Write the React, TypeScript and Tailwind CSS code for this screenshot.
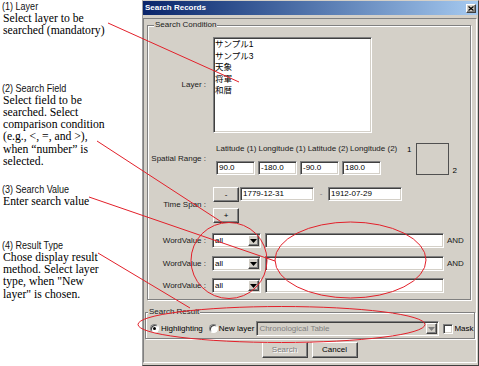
const ui = "font-['Liberation_Sans',Arial,sans-serif] text-[8px] leading-[10px] text-black whitespace-nowrap";
const sunken =
  "border border-t-[#808080] border-l-[#808080] border-r-white border-b-white shadow-[inset_1px_1px_0_#404040,inset_-1px_-1px_0_#d4d0c8]";
const raised =
  "border border-t-white border-l-white border-r-[#404040] border-b-[#404040] shadow-[inset_-1px_-1px_0_#808080,inset_1px_1px_0_#d4d0c8]";
const etched = "border border-[#808080] shadow-[1px_1px_0_white,inset_1px_1px_0_white]";

type Note = { title: string; lines: string[]; mt: string };

const notes: Note[] = [
  { title: "(1) Layer", lines: ["Select layer to be", "searched (mandatory)"], mt: "mt-0" },
  {
    title: "(2) Search Field",
    lines: [
      "Select field to be",
      "searched. Select",
      "comparison condition",
      "(e.g., <, =, and >),",
      "when \u201cnumber\u201d is",
      "selected.",
    ],
    mt: "mt-[44px]",
  },
  { title: "(3) Search Value", lines: ["Enter search value"], mt: "mt-[15px]" },
  {
    title: "(4) Result Type",
    lines: ["Chose display result", "method. Select layer", 'type, when "New', 'layer" is chosen.'],
    mt: "mt-[30px]",
  },
];

function Label({ children, className = "" }: { children: React.ReactNode; className?: string }) {
  return <div className={`w-[58px] shrink-0 text-right text-[#1a1a1a] ${className}`}>{children}</div>;
}

function Field({ value, className = "" }: { value?: string; className?: string }) {
  return (
    <div className={`${sunken} bg-white shrink-0 flex items-center pl-[2px] overflow-hidden ${className}`}>
      {value}
    </div>
  );
}

function Arrow({ disabled }: { disabled?: boolean }) {
  return (
    <svg width="7" height="4" viewBox="0 0 7 4">
      <path d="M0 0h7L3.5 4z" fill={disabled ? "#808080" : "#000"} />
    </svg>
  );
}

function Combo({ value, className = "", disabled }: { value: string; className?: string; disabled?: boolean }) {
  return (
    <div
      className={`${sunken} ${disabled ? "bg-[#d4d0c8] text-[#808080]" : "bg-white"} shrink-0 flex items-stretch p-[1px] ${className}`}
    >
      <div className="flex-1 flex items-center pl-[1px] overflow-hidden">{value}</div>
      <div className={`${raised} bg-[#d4d0c8] w-[11px] flex items-center justify-center`}>
        <Arrow disabled={disabled} />
      </div>
    </div>
  );
}

function Radio({ checked }: { checked?: boolean }) {
  return (
    <div className="w-[9px] h-[9px] shrink-0 rounded-full border border-t-[#808080] border-l-[#808080] border-r-white border-b-white bg-white flex items-center justify-center shadow-[inset_1px_1px_0_#404040]">
      {checked && <div className="w-[3px] h-[3px] rounded-full bg-black" />}
    </div>
  );
}

function WordRow({ and, mt }: { and: boolean; mt: string }) {
  return (
    <div className={`flex items-center ${mt}`}>
      <Label>WordValue :</Label>
      <Combo value="all" className="ml-[6px] w-[49px] h-[15px]" />
      <Field className="ml-[4px] w-[179px] h-[15px]" />
      {and && <span className="ml-[3px] text-[#1a1a1a]">AND</span>}
    </div>
  );
}

export default function App() {
  return (
    <div className="relative w-[479px] h-[366px] bg-white flex overflow-hidden">
      <div className="w-[142px] shrink-0 pl-[2px]">
        {notes.map((n) => (
          <div key={n.title} className={n.mt}>
            <div className="h-[13px] font-['Liberation_Sans',sans-serif] text-[10.5px] leading-[13px] text-[#111]">
              <span className="inline-block origin-left scale-x-[0.86] whitespace-nowrap">{n.title}</span>
            </div>
            {n.lines.map((l) => (
              <div key={l} className="pl-[1px] font-['Liberation_Serif',serif] text-[11.7px] leading-[12.3px] whitespace-nowrap">
                {l}
              </div>
            ))}
          </div>
        ))}
      </div>

      <div
        className={`${ui} w-[337px] h-[366px] shrink-0 flex flex-col bg-[#d4d0c8] border border-t-[#d4d0c8] border-l-[#a0a0a0] border-r-[#404040] border-b-[#404040]`}
      >
        <div className="h-[14px] shrink-0 flex items-center justify-between bg-gradient-to-r from-[#0a246a] to-[#a6caf0] pl-[2px] pr-[2px]">
          <span className="font-bold text-white">Search Records</span>
          <div className={`${raised} bg-[#d4d0c8] w-[10px] h-[9px] flex items-center justify-center`}>
            <svg width="6" height="5" viewBox="0 0 6 5">
              <path d="M0.5 0.5l5 4M5.5 0.5l-5 4" stroke="#000" strokeWidth="1.2" />
            </svg>
          </div>
        </div>

        <div className="flex-1 mt-[3px] mr-[1px] mb-[2px] flex flex-col border border-t-[#808080] border-l-[#808080] border-r-white border-b-white">
          {/* Search Condition */}
          <div className={`relative mt-[6px] ml-[3px] mr-[5px] pb-[6px] ${etched}`}>
            <span className="absolute -top-[6px] left-[6px] bg-[#d4d0c8] px-[1px] text-[#1a1a1a]">Search Condition</span>

            <div className="flex items-center mt-[11px]">
              <Label>Layer :</Label>
              <div className={`${sunken} ml-[7px] w-[159px] h-[96px] bg-white pl-[1px] pt-[1px] font-['Liberation_Sans','Noto_Sans_CJK_JP',sans-serif] text-[8.5px] leading-[11.5px]`}>
                <div>サンプル1</div>
                <div>サンプル3</div>
                <div>天象</div>
                <div>将軍</div>
                <div>和暦</div>
              </div>
            </div>

            <div className="flex items-center mt-[10px]">
              <Label>Spatial Range :</Label>
              <div className="ml-[7px] flex items-start">
                <div className="w-[168px] flex flex-col pl-[3px]">
                  <div className="flex gap-[2px] mt-[1px] text-[#1a1a1a]">
                    <span>Latitude (1)</span>
                    <span>Longitude (1)</span>
                    <span>Latitude (2)</span>
                    <span>Longitude (2)</span>
                  </div>
                  <div className="flex gap-[3px] mt-[7px]">
                    <Field value="90.0" className="w-[39px] h-[14px]" />
                    <Field value="-180.0" className="w-[39px] h-[14px]" />
                    <Field value="-90.0" className="w-[39px] h-[14px]" />
                    <Field value="180.0" className="w-[39px] h-[14px]" />
                  </div>
                </div>
                <div className="ml-[26px] flex items-start">
                  <span className="mt-[2px]">1</span>
                  <div className="ml-[5px] w-[33px] h-[32px] border border-[#505050]" />
                  <span className="self-end ml-[3px] mb-[-1px]">2</span>
                </div>
              </div>
            </div>

            <div className="flex items-center mt-[12px]">
              <Label>Time Span :</Label>
              <div className="ml-[7px] flex flex-col">
                <div className="flex items-start">
                  <div className={`${raised} bg-[#d4d0c8] w-[26px] h-[15px] flex items-center justify-center`}>-</div>
                  <Field value="1779-12-31" className="ml-[1px] w-[74px] h-[14px]" />
                  <span className="w-[14px] text-center text-[#808080] leading-[14px]">-</span>
                  <Field value="1912-07-29" className="w-[74px] h-[14px]" />
                </div>
                <div className={`${raised} bg-[#d4d0c8] mt-[6px] w-[26px] h-[15px] flex items-center justify-center`}>+</div>
              </div>
            </div>

            <WordRow and mt="mt-[10px]" />
            <WordRow and mt="mt-[8px]" />
            <WordRow and={false} mt="mt-[7px]" />
          </div>

          {/* Search Result */}
          <div className={`relative mt-[12px] ml-[1px] mr-[1px] pt-[8px] pb-[2px] ${etched}`}>
            <span className="absolute -top-[6px] left-[2px] bg-[#d4d0c8] px-[1px] text-[#1a1a1a]">Search Result</span>
            <div className="flex items-center h-[15px] pl-[4px]">
              <Radio checked />
              <span className="ml-[2px]">Highlighting</span>
              <div className="ml-[6px]">
                <Radio />
              </div>
              <span className="ml-[1px]">New layer</span>
              <Combo value="Chronological Table" disabled className="ml-[2px] w-[183px] h-[15px]" />
              <div className={`${sunken} ml-[4px] w-[10px] h-[10px] shrink-0 bg-white`} />
              <span className="ml-[1px]">Mask</span>
            </div>
          </div>

          <div className="mt-[3px] flex justify-center gap-[4px] pr-[1px]">
            <div className={`${raised} w-[46px] h-[16px] flex items-center justify-center text-[#808080] [text-shadow:1px_1px_0_white]`}>
              Search
            </div>
            <div className={`${raised} w-[46px] h-[16px] flex items-center justify-center`}>Cancel</div>
          </div>
        </div>
      </div>

      <svg className="absolute inset-0 pointer-events-none" width="479" height="366" viewBox="0 0 479 366" fill="none">
        <g stroke="#e3202a" strokeWidth="1">
          <line x1="108" y1="23" x2="239" y2="82" />
          <line x1="97" y1="141" x2="223" y2="223" />
          <line x1="89" y1="197" x2="275" y2="261" />
          <line x1="98" y1="253" x2="190" y2="308" />
          <ellipse cx="229" cy="260.5" rx="38" ry="38" />
          <ellipse cx="350.5" cy="260" rx="75.5" ry="38" />
          <ellipse cx="281.5" cy="324.5" rx="143.5" ry="18" />
        </g>
      </svg>
    </div>
  );
}
